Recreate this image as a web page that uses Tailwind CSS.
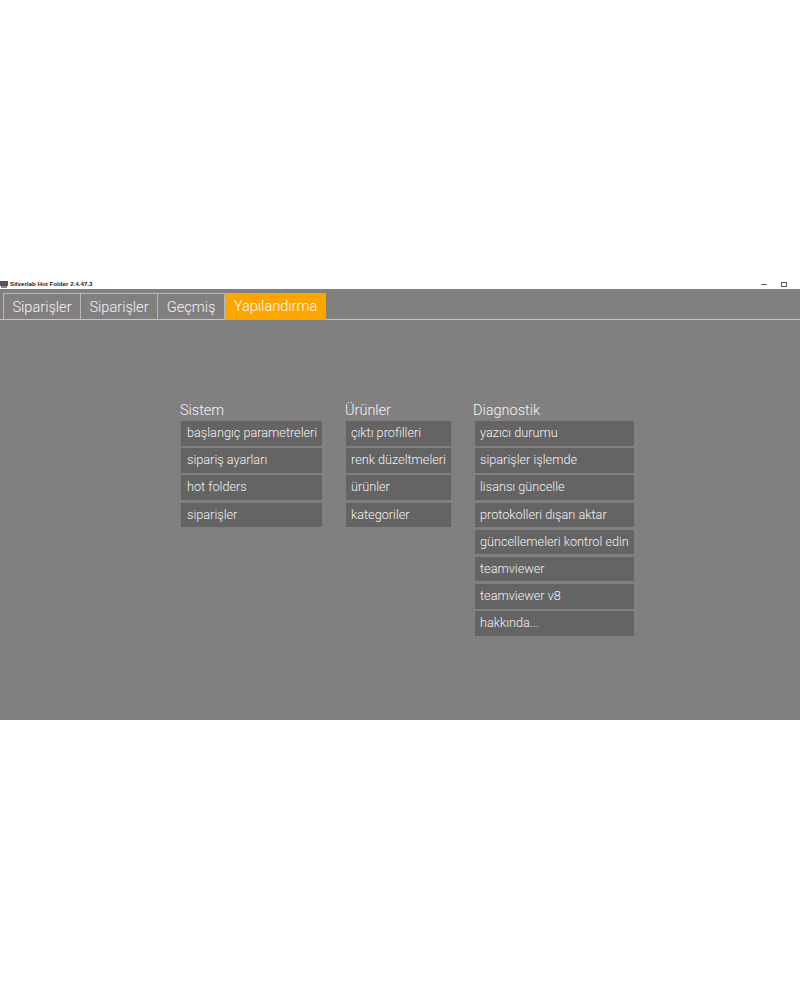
<!DOCTYPE html>
<html>
<head>
<meta charset="utf-8">
<script src="https://cdn.jsdelivr.net/npm/@tailwindcss/browser@4"></script>
</head>
<body class="bg-white font-['Roboto',sans-serif]">
<div class="w-[800px] h-[1000px] pt-[280px]">
  <div class="h-[440px] flex flex-col">
    <!-- title bar -->
    <div class="h-[9px] pb-[1px] flex items-center bg-white">
      <svg class="w-[8px] h-[7px]" viewBox="0 0 8 7"><rect x="0" y="0" width="8" height="5" fill="#555"/><rect x="1" y="5" width="6" height="2" fill="#888"/></svg>
      <span class="ml-[2px] text-[6.2px] leading-[8px] font-bold text-[#222] font-['Liberation_Sans',sans-serif]">Silverlab Hot Folder 2.4.47.3</span>
      <div class="ml-auto flex items-center">
        <div class="w-[6px] h-px bg-[#666] mr-[14px]"></div>
        <div class="w-[6px] h-[5px] border border-[#555] mr-[13px]"></div>
      </div>
    </div>
    <!-- main -->
    <div class="flex-1 bg-[#817f80] flex flex-col">
      <div class="h-[31px] pt-[4px] border-b border-[#c4c3c3] flex pl-[3px]">
        <div class="w-[78px] h-[27px] border border-b-0 border-[#b9b8b8] text-[#f4f4f4] text-[14.6px] font-light leading-[27px] text-center">Siparişler</div>
        <div class="w-[77px] h-[27px] border border-b-0 border-l-0 border-[#b9b8b8] text-[#f4f4f4] text-[14.6px] font-light leading-[27px] text-center">Siparişler</div>
        <div class="w-[67px] h-[27px] border border-b-0 border-l-0 border-[#b9b8b8] text-[#f4f4f4] text-[14.6px] font-light leading-[27px] text-center">Geçmiş</div>
        <div class="w-[101px] h-[27px] bg-[#ffa500] text-[#fff] text-[14.6px] font-light leading-[27px] text-center">Yapılandırma</div>
      </div>
      <div class="flex pl-[180px] pt-[82px]">
        <div class="w-[165px]">
          <div class="text-[14.5px] leading-[18px] font-light text-[#f4f4f4]">Sistem</div>
          <div class="mt-px ml-px w-[141px] flex flex-col gap-[2.7px]">
            <div class="h-[24.5px] bg-[#656465] pl-[6px] text-[12.7px] leading-[24.5px] text-[#f2f2f2] font-light whitespace-nowrap">başlangıç parametreleri</div>
            <div class="h-[24.5px] bg-[#656465] pl-[6px] text-[12.7px] leading-[24.5px] text-[#f2f2f2] font-light whitespace-nowrap">sipariş ayarları</div>
            <div class="h-[24.5px] bg-[#656465] pl-[6px] text-[12.7px] leading-[24.5px] text-[#f2f2f2] font-light whitespace-nowrap">hot folders</div>
            <div class="h-[24.5px] bg-[#656465] pl-[6px] text-[12.7px] leading-[24.5px] text-[#f2f2f2] font-light whitespace-nowrap">siparişler</div>
          </div>
        </div>
        <div class="w-[129px]">
          <div class="text-[14.5px] leading-[18px] font-light text-[#f4f4f4]">Ürünler</div>
          <div class="mt-px ml-px w-[105px] flex flex-col gap-[2.7px]">
            <div class="h-[24.5px] bg-[#656465] pl-[5px] text-[12.7px] leading-[24.5px] text-[#f2f2f2] font-light whitespace-nowrap">çıktı profilleri</div>
            <div class="h-[24.5px] bg-[#656465] pl-[5px] text-[12.7px] leading-[24.5px] text-[#f2f2f2] font-light whitespace-nowrap">renk düzeltmeleri</div>
            <div class="h-[24.5px] bg-[#656465] pl-[5px] text-[12.7px] leading-[24.5px] text-[#f2f2f2] font-light whitespace-nowrap">ürünler</div>
            <div class="h-[24.5px] bg-[#656465] pl-[5px] text-[12.7px] leading-[24.5px] text-[#f2f2f2] font-light whitespace-nowrap">kategoriler</div>
          </div>
        </div>
        <div class="w-[160px]">
          <div class="-ml-px text-[14.5px] leading-[18px] font-light text-[#f4f4f4]">Diagnostik</div>
          <div class="mt-px ml-px w-[159px] flex flex-col gap-[2.7px]">
            <div class="h-[24.5px] bg-[#656465] pl-[5px] text-[12.7px] leading-[24.5px] text-[#f2f2f2] font-light whitespace-nowrap">yazıcı durumu</div>
            <div class="h-[24.5px] bg-[#656465] pl-[5px] text-[12.7px] leading-[24.5px] text-[#f2f2f2] font-light whitespace-nowrap">siparişler işlemde</div>
            <div class="h-[24.5px] bg-[#656465] pl-[5px] text-[12.7px] leading-[24.5px] text-[#f2f2f2] font-light whitespace-nowrap">lisansı güncelle</div>
            <div class="h-[24.5px] bg-[#656465] pl-[5px] text-[12.7px] leading-[24.5px] text-[#f2f2f2] font-light whitespace-nowrap">protokolleri dışarı aktar</div>
            <div class="h-[24.5px] bg-[#656465] pl-[5px] text-[12.7px] leading-[24.5px] text-[#f2f2f2] font-light whitespace-nowrap">güncellemeleri kontrol edin</div>
            <div class="h-[24.5px] bg-[#656465] pl-[5px] text-[12.7px] leading-[24.5px] text-[#f2f2f2] font-light whitespace-nowrap">teamviewer</div>
            <div class="h-[24.5px] bg-[#656465] pl-[5px] text-[12.7px] leading-[24.5px] text-[#f2f2f2] font-light whitespace-nowrap">teamviewer v8</div>
            <div class="h-[24.5px] bg-[#656465] pl-[5px] text-[12.7px] leading-[24.5px] text-[#f2f2f2] font-light whitespace-nowrap">hakkında...</div>
          </div>
        </div>
      </div>
    </div>
  </div>
</div>
</body>
</html>
